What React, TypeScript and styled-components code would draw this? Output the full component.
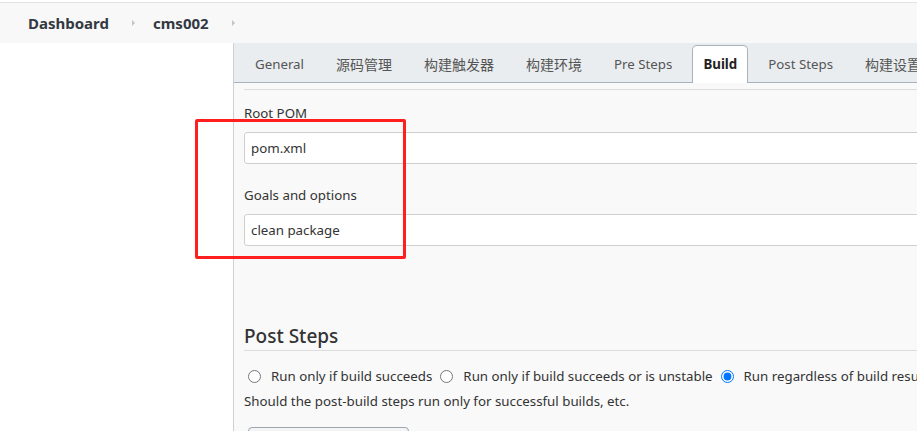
import React from "react";
import styled, { createGlobalStyle } from "styled-components";

const Global = createGlobalStyle`
  html, body { margin: 0; padding: 0; background: #fff; overflow: hidden; }
  body { font-family: "Noto Sans", "Noto Sans CJK SC", sans-serif; color: #333; }
`;

const Page = styled.div`
  position: relative;
  width: 917px;
  height: 431px;
  overflow: hidden;
`;

const Header = styled.div`
  margin-top: 2px;
  border-top: 1px solid #e3e3e3;
  background: #f8f8f8;
  height: 40px;
  display: flex;
  align-items: center;
  padding-left: 28px;
`;

const Crumb = styled.span`
  font-size: 15px;
  font-weight: 700;
  color: #333842;
`;

const Caret = styled.span`
  width: 0;
  height: 0;
  border-top: 3px solid transparent;
  border-bottom: 3px solid transparent;
  border-left: 3px solid #c4c4c4;
  margin: 0 18px 0 23px;
`;

const Main = styled.div`
  display: flex;
  height: 388px;
`;

const Sidebar = styled.div`
  width: 233px;
  flex: none;
  background: #fff;
`;

const Content = styled.div`
  width: 900px;
  flex: none;
  border-left: 1px solid #d0d0d0;
  background: #f9f9f9;
`;

const TabBar = styled.div`
  height: 39px;
  background: #e9edf0;
  border-bottom: 1px solid #a9b2bb;
  display: flex;
  align-items: flex-end;
  padding-left: 9px;
  gap: 8px;
`;

const Tab = styled.div<{ $active?: boolean }>`
  box-sizing: border-box;
  height: 38px;
  padding: 0 ${p => (p.$active ? 10 : 11)}px 2px;
  display: flex;
  align-items: center;
  font-size: 13.3px;
  color: ${p => (p.$active ? "#222" : "#555")};
  font-weight: ${p => (p.$active ? 700 : 400)};
  background: ${p => (p.$active ? "#fff" : "transparent")};
  border: 1px solid ${p => (p.$active ? "#a9b2bb" : "transparent")};
  border-bottom: none;
  border-radius: 5px 5px 0 0;
  margin-bottom: -1px;
  white-space: nowrap;
`;

const Cjk = styled.span`
  font-size: 14px;
`;

const Body = styled.div`
  padding: 6px 0 0 10px;
`;

const Divider = styled.div`
  border-top: 1px solid #dcdcdc;
`;

const Label = styled.div<{ $top: number }>`
  font-size: 13.3px;
  color: #333;
  line-height: 20px;
  margin-top: ${p => p.$top}px;
`;

const Field = styled.div`
  box-sizing: border-box;
  height: 32px;
  margin-top: 9px;
  background: #fff;
  border: 1px solid #cfcfcf;
  border-radius: 3px;
  display: flex;
  align-items: center;
  padding-left: 6px;
  font-size: 13.3px;
  color: #333;
`;

const SectionTitle = styled.div`
  margin-top: 77px;
  font-size: 19px;
  font-weight: 500;
  color: #333;
  line-height: 26px;
  padding-bottom: 1px;
  border-bottom: 1px solid #dcdcdc;
`;

const RadioRow = styled.div`
  display: flex;
  align-items: center;
  margin-top: 15px;
  height: 20px;
  padding-left: 4px;
`;

const RadioLabel = styled.label`
  display: flex;
  align-items: center;
  font-size: 13.3px;
  color: #333;
  margin-right: 8px;
  white-space: nowrap;
  input {
    margin: 0 10px 0 0;
    width: 13px;
    height: 13px;
    accent-color: #0075ff;
  }
`;

const Help = styled.div`
  margin-top: 5px;
  font-size: 13.3px;
  line-height: 20px;
  color: #333;
`;

const Button = styled.div`
  margin: 16px 0 0 4px;
  width: 161px;
  height: 30px;
  box-sizing: border-box;
  border: 1px solid #9ca6b0;
  border-radius: 4px;
  background: #f4f4f4;
`;

const Annotation = styled.div`
  position: absolute;
  left: 195px;
  top: 119px;
  width: 211px;
  height: 140px;
  box-sizing: border-box;
  border: 3px solid #ff1f1f;
  border-radius: 2px;
  pointer-events: none;
`;

const tabs = ["General", "源码管理", "构建触发器", "构建环境", "Pre Steps", "Build", "Post Steps", "构建设置"];
const isCjk = (s: string) => /[\u4e00-\u9fff]/.test(s);

export default function App() {
  return (
    <Page>
      <Global />
      <Header>
        <Crumb>Dashboard</Crumb>
        <Caret />
        <Crumb>cms002</Crumb>
        <Caret />
      </Header>
      <Main>
        <Sidebar />
        <Content>
          <TabBar>
            {tabs.map(t => (
              <Tab key={t} $active={t === "Build"}>{isCjk(t) ? <Cjk>{t}</Cjk> : t}</Tab>
            ))}
          </TabBar>
          <Body>
            <Divider />
            <Label $top={13}>Root POM</Label>
            <Field>pom.xml</Field>
            <Label $top={21}>Goals and options</Label>
            <Field>clean package</Field>
            <SectionTitle>Post Steps</SectionTitle>
            <RadioRow>
              <RadioLabel><input type="radio" name="ps" readOnly />Run only if build succeeds</RadioLabel>
              <RadioLabel><input type="radio" name="ps" readOnly />Run only if build succeeds or is unstable</RadioLabel>
              <RadioLabel><input type="radio" name="ps" defaultChecked />Run regardless of build result</RadioLabel>
            </RadioRow>
            <Help>Should the post-build steps run only for successful builds, etc.</Help>
            <Button />
          </Body>
        </Content>
      </Main>
      <Annotation />
    </Page>
  );
}
